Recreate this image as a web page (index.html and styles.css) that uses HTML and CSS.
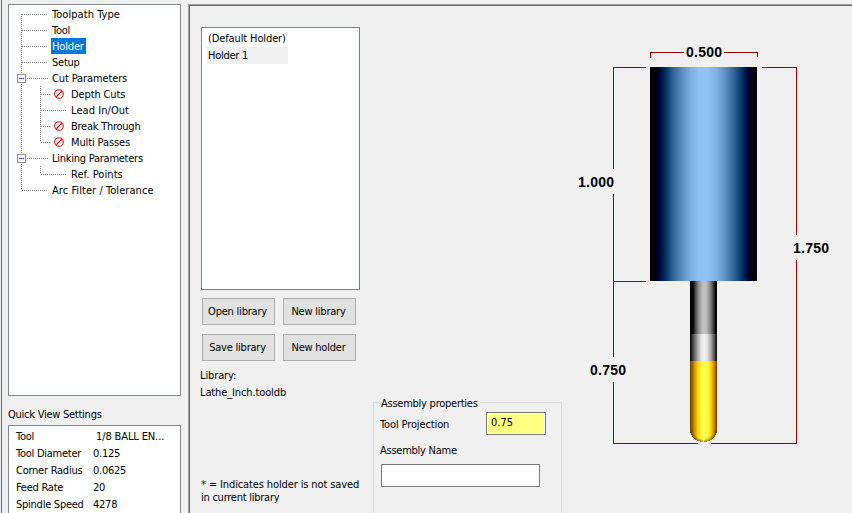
FILE: index.html
```html
<!DOCTYPE html>
<html lang="en">
<head>
<meta charset="utf-8">
<title>Toolpath Holder</title>
<link rel="stylesheet" href="styles.css">
</head>
<body>
<aside class="sidebar">
  <div class="tree">
    <svg class="tree-lines" width="170" height="389" viewBox="9 5 170 389" shape-rendering="crispEdges" aria-hidden="true">
      <g class="dots">
        <path d="M21.5 14V190M22 14.5H48M22 30.5H48M22 46.5H48M22 62.5H48M27 78.5H48M27 158.5H48M22 190.5H48"/>
        <path d="M40.5 86V142M41 94.5H51M41 110.5H67M41 126.5H51M41 142.5H51M40.5 166V174M41 174.5H67"/>
      </g>
      <g class="expander">
        <rect x="17.5" y="74.5" width="8" height="8" rx="1"/><path d="M19 78.5H24"/>
        <rect x="17.5" y="154.5" width="8" height="8" rx="1"/><path d="M19 158.5H24"/>
      </g>
      <g class="disabled-mark" shape-rendering="auto">
        <circle cx="59" cy="94" r="4.300"/><path d="M56 97L62 91"/>
        <circle cx="59" cy="126" r="4.300"/><path d="M56 129L62 123"/>
        <circle cx="59" cy="142" r="4.300"/><path d="M56 145L62 139"/>
      </g>
    </svg>
    <ul class="tree-items">
      <li><span class="wide">Toolpath Type</span></li>
      <li><span>Tool</span></li>
      <li><span class="selected">Holder</span></li>
      <li><span>Setup</span></li>
      <li><span class="normal">Cut Parameters</span></li>
      <li class="child"><span class="normal">Depth Cuts</span></li>
      <li class="child"><span class="wide">Lead In/Out</span></li>
      <li class="child"><span>Break Through</span></li>
      <li class="child"><span class="normal">Multi Passes</span></li>
      <li><span>Linking Parameters</span></li>
      <li class="child"><span class="wide">Ref. Points</span></li>
      <li><span class="wide">Arc Filter / Tolerance</span></li>
    </ul>
  </div>
  <div class="quick-title">Quick View Settings</div>
  <dl class="quick">
    <dt>Tool</dt><dd class="tool-name normal">1/8 BALL EN...</dd>
    <dt>Tool Diameter</dt><dd>0.125</dd>
    <dt>Corner Radius</dt><dd>0.0625</dd>
    <dt>Feed Rate</dt><dd>20</dd>
    <dt>Spindle Speed</dt><dd>4278</dd>
  </dl>
</aside>
<main class="page">
  <section class="library">
    <ul class="holders">
      <li class="normal">(Default Holder)</li>
      <li class="current">Holder 1</li>
    </ul>
    <div class="buttons">
      <button>Open library</button><button>New library</button>
      <button>Save library</button><button>New holder</button>
    </div>
    <div class="lib-info"><div class="normal">Library:</div><div class="lib-name normal">Lathe_Inch.tooldb</div></div>
    <p class="note"><span class="normal">* = Indicates holder is not saved</span><br>in current library</p>
  </section>
  <section class="assembly">
    <h2>Assembly properties</h2>
    <div class="projection"><label class="normal" for="proj">Tool Projection</label><input id="proj" value="0.75"></div>
    <label class="name-label" for="name">Assembly Name</label>
    <input id="name">
  </section>
  <svg class="drawing" width="282" height="507" viewBox="570 6 282 507" shape-rendering="crispEdges">
    <defs>
      <linearGradient id="holder">
        <stop offset="0" stop-color="#000"/><stop offset=".035" stop-color="#000"/>
        <stop offset=".08" stop-color="#000034"/><stop offset=".15" stop-color="#003466"/>
        <stop offset=".21" stop-color="#2d6193"/><stop offset=".3" stop-color="#5a8ec0"/>
        <stop offset=".38" stop-color="#7cb0e2"/><stop offset=".46" stop-color="#8ec2f4"/>
        <stop offset=".54" stop-color="#8ec2f4"/><stop offset=".62" stop-color="#7eb2e4"/>
        <stop offset=".7" stop-color="#5e92c4"/><stop offset=".79" stop-color="#2d6193"/>
        <stop offset=".86" stop-color="#003466"/><stop offset=".92" stop-color="#000034"/>
        <stop offset=".975" stop-color="#000"/><stop offset="1" stop-color="#000"/>
      </linearGradient>
      <linearGradient id="shank">
        <stop offset="0" stop-color="#000"/><stop offset=".11" stop-color="#000"/>
        <stop offset=".2" stop-color="#484848"/><stop offset=".32" stop-color="#8b8b8b"/>
        <stop offset=".47" stop-color="#c0c0c0"/><stop offset=".6" stop-color="#c0c0c0"/>
        <stop offset=".74" stop-color="#898989"/><stop offset=".86" stop-color="#444"/>
        <stop offset=".94" stop-color="#000"/><stop offset="1" stop-color="#000"/>
      </linearGradient>
      <linearGradient id="neck">
        <stop offset="0" stop-color="#000"/><stop offset=".1" stop-color="#404040"/>
        <stop offset=".25" stop-color="#999"/><stop offset=".4" stop-color="#dedede"/>
        <stop offset=".52" stop-color="#f6f6f6"/><stop offset=".65" stop-color="#dedede"/>
        <stop offset=".8" stop-color="#999"/><stop offset=".94" stop-color="#333"/><stop offset="1" stop-color="#000"/>
      </linearGradient>
      <linearGradient id="cutter">
        <stop offset="0" stop-color="#703800"/><stop offset=".07" stop-color="#935b00"/>
        <stop offset=".17" stop-color="#cd9500"/><stop offset=".27" stop-color="#fac800"/>
        <stop offset=".4" stop-color="#fff834"/><stop offset=".52" stop-color="#ffff58"/>
        <stop offset=".67" stop-color="#fff938"/><stop offset=".8" stop-color="#f7c600"/>
        <stop offset=".92" stop-color="#b47b00"/><stop offset="1" stop-color="#683000"/>
      </linearGradient>
      <radialGradient id="tip" gradientUnits="userSpaceOnUse" cx="703.500" cy="428.500" r="14">
        <stop offset=".72" stop-color="#804800" stop-opacity="0"/>
        <stop offset="1" stop-color="#804800" stop-opacity=".8"/>
      </radialGradient>
    </defs>
    <rect x="650" y="67" width="107" height="214" fill="url(#holder)"/>
    <rect x="690" y="281" width="27" height="53" fill="url(#shank)"/>
    <rect x="690" y="334" width="27" height="27" fill="url(#neck)"/>
    <path d="M690 361H717V430A13.500 12 0 0 1 690 430Z" fill="url(#cutter)"/>
    <path d="M690 430H699Q700 437 703.500 442A13.500 12 0 0 1 690 430Z M717 430H708Q707 437 703.500 442A13.500 12 0 0 0 717 430Z" fill="url(#tip)"/>
    <g class="dim-line">
      <path d="M650.500 58V52.500H684M724 52.500H757.500V57"/>
      <path d="M646 67.500H613.500V169M613.500 194V357M613.500 281.500H646M613.500 382V443.500H698"/>
      <path d="M762 67.500H796.500V235M796.500 260V443.500H711"/>
    </g>
    <g class="dim-text">
      <text x="686" y="57" textLength="36">0.500</text>
      <text x="578" y="187" textLength="36">1.000</text>
      <text x="793" y="253" textLength="36">1.750</text>
      <text x="590" y="375" textLength="36">0.750</text>
    </g>
  </svg>
</main>
</body>
</html>
```
FILE: styles.css
```css
* { box-sizing: border-box; }
body {
  margin: 0;
  width: 852px;
  height: 513px;
  overflow: hidden;
  display: flex;
  background: #f0f0f0;
  color: #000;
  font: 11px/16px "DejaVu Sans Condensed", "DejaVu Sans", sans-serif;
  font-stretch: condensed;
  letter-spacing: -0.25px;
  white-space: nowrap;
}
ul, dl, p, h2 { margin: 0; padding: 0; list-style: none; font: inherit; }
.normal { letter-spacing: -0.12px; }
.wide { letter-spacing: 0.06px; }

.sidebar {
  width: 187px;
  flex: none;
  margin-left: 1px;
  padding: 4px 7px 0 6px;
  border-left: 1px solid #696969;
}
.tree {
  position: relative;
  width: 173px;
  height: 392px;
  border: 1px solid #828790;
  background: #fff;
}
.tree-lines { position: absolute; left: 0; top: 0; }
.tree-items { position: relative; padding-top: 1px; }
.tree-items li { height: 16px; padding-left: 42px; }
.tree-items .child { padding-left: 61px; }
.tree-items span { display: inline-block; height: 16px; padding: 0 1px; line-height: 18px; }
.tree-items .selected { background: #0078d7; color: #fff; padding-right: 2px; letter-spacing: -0.15px; }
.dots path { fill: none; stroke: #808080; stroke-dasharray: 1 1; }
.expander rect { fill: #f4f4f4; stroke: #919191; }
.expander path { stroke: #3f58a8; }
.disabled-mark { fill: none; stroke: #f01010; stroke-width: 1.1; }

.quick-title { margin: 11px 0 2px; }
.quick {
  width: 173px;
  height: 100px;
  padding: 3px 0 0 7px;
  border: 1px solid #828790;
  background: #fff;
  display: grid;
  grid-template-columns: 77px 1fr;
  grid-auto-rows: 17px;
  align-content: start;
}
.quick dd { margin: 0; }
.quick .tool-name { padding-left: 3px; }

.page {
  flex: 1;
  display: flex;
  margin-top: 4px;
  height: 520px;
  border: solid #a0a0a0;
  border-width: 1px 0 0 1px;
  box-shadow: inset 1px 1px #696969;
}
.library { width: 184px; flex: none; padding: 22px 0 0 12px; }
.holders {
  width: 159px;
  height: 263px;
  padding: 2px 5px;
  border: 1px solid #7a7f87;
  background: #fff;
}
.holders li { width: 81px; height: 17px; line-height: 17px; padding-left: 1px; }
.holders .current { background: #f0f0f0; }
.buttons {
  display: grid;
  grid-template-columns: 73px 73px;
  grid-auto-rows: 27px;
  gap: 9px 8px;
  margin: 8px 0 0 1px;
}
button {
  padding: 1px 2px 0 0;
  border: 1px solid #adadad;
  background: #e1e1e1;
  color: inherit;
  font: inherit;
  letter-spacing: -0.22px;
}
.lib-info { margin: 6px 0 0 -1px; line-height: 17px; }
.note { margin-top: 77px; line-height: 13px; }

.assembly {
  width: 189px;
  height: 130px;
  flex: none;
  margin-top: 397px;
  padding: 0 0 0 7px;
  border: 1px solid #dcdcdc;
}
.assembly h2 {
  width: 101px;
  height: 16px;
  margin: -7px 0 0 -2px;
  padding-left: 2px;
  background: #f0f0f0;
}
.projection { display: flex; justify-content: space-between; width: 166px; height: 24px; margin: 0 0 0 -1px; }
.projection label { padding-top: 5px; }
input {
  border: 1px solid #7a7a7a;
  border-radius: 0;
  outline: 0;
  background: #fff;
  color: #000;
  font: inherit;
  letter-spacing: 0;
}
#proj { width: 60px; height: 23px; padding: 0 4px 3px; background: #ffff80; box-shadow: inset 0 0 0 1px #fff; }
.name-label { display: block; margin: 7px 0 0 -1px; }
#name { display: block; width: 159px; height: 23px; margin: 5px 0 0; }

.drawing { flex: none; margin: 1px 0 0 8px; }
.dim-line path { fill: none; stroke: #960000; }
.dim-text { font: bold 14px "Liberation Sans Narrow", "Liberation Sans", Arial, sans-serif; letter-spacing: 0; }
```
